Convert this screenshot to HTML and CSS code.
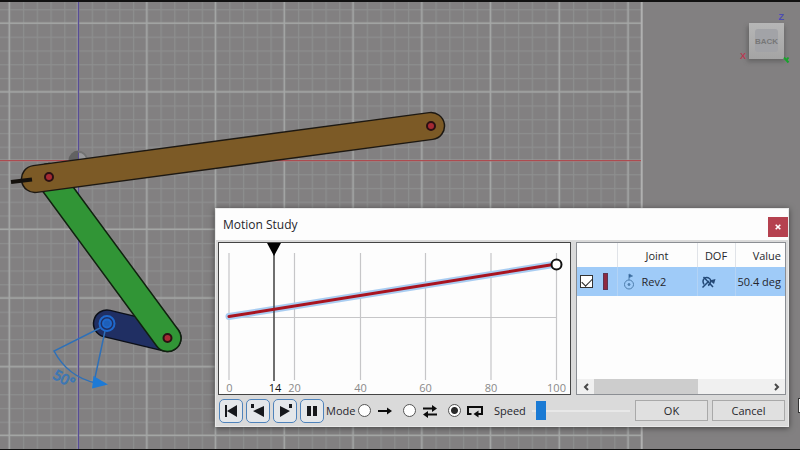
FILE: index.html
```html
<!DOCTYPE html>
<html lang="en">
<head>
<meta charset="utf-8">
<title>Motion Study</title>
<link rel="stylesheet" href="styles.css">
</head>
<body>
<main class="viewport">
  <svg class="scene" width="800" height="450" viewBox="0 0 800 450" role="img" aria-label="Linkage viewed from the back">
    <defs>
      <pattern id="minor" x="9.2" y="22.9" width="13.75" height="13.75" patternUnits="userSpaceOnUse">
        <path d="M0 0H13.75M0 0V13.75" stroke="#8d8e8e" stroke-width="2.400" fill="none"/>
      </pattern>
      <pattern id="major" x="-25" y="-11" width="68.75" height="68.7" patternUnits="userSpaceOnUse">
        <path d="M0 34.1H68.75M34.2 0V68.7" stroke="#a5a7a6" stroke-width="1.500" fill="none"/>
      </pattern>
      <linearGradient id="cube" x1="0" y1="0" x2="0" y2="1">
        <stop offset="0" stop-color="#b6b6b6"/><stop offset="1" stop-color="#a4a4a4"/>
      </linearGradient>
      <filter id="soft" x="-30%" y="-30%" width="160%" height="160%"><feGaussianBlur stdDeviation="2"/></filter>
    </defs>
    <rect width="641" height="450" fill="url(#minor)"/>
    <rect width="641" height="450" fill="url(#major)"/>
    <path d="M641.7 2V450" stroke="#b0b0b0" stroke-width="2"/>
    <path d="M0 160.7H641" stroke="#ad4b50" stroke-width="1.2"/>
    <path d="M78.5 2V450" stroke="#584c96" stroke-width="1.3"/>
    <path d="M78 160H68.500A10 10 0 0 1 78 150.500Z" fill="#626262"/>
    <path d="M78 151.500A9 9 0 0 1 87 160" fill="none" stroke="#727272" stroke-width="2"/>
    <path d="M79 160V153A7 7 0 0 1 86 160Z" fill="#98989a"/>
    <g stroke-linecap="round">
      <path d="M107 323.500L167.500 338" stroke="#0c0f18" stroke-width="28.500"/>
      <path d="M107 323.500L167.500 338" stroke="#202f63" stroke-width="25.500"/>
      <path d="M49 177L167.500 338" stroke="#10220f" stroke-width="28.500"/>
      <path d="M49 177L167.500 338" stroke="#319536" stroke-width="25.500"/>
      <path d="M35 179L431 126" stroke="#1d1812" stroke-width="28.500"/>
      <path d="M35 179L431 126" stroke="#7c5a26" stroke-width="25.500"/>
    </g>
    <path d="M11 182L32 179.500" stroke="#15110d" stroke-width="4"/>
    <g fill="#a62a34" stroke="#2b1013" stroke-width="2">
      <circle cx="49" cy="177" r="4"/><circle cx="431" cy="126" r="4"/><circle cx="167.500" cy="338" r="4"/>
    </g>
    <g fill="none" stroke="#2e70b8" stroke-width="1.500">
      <path d="M100 328L54 351Q68 377 96 383M105 331L94.500 380"/>
      <circle cx="107" cy="323.500" r="7.500" stroke="#1f69cc" stroke-width="2"/>
      <circle cx="107" cy="323.500" r="4" fill="#1f5fb8" stroke="#1f69cc" stroke-width="2"/>
    </g>
    <path d="M93.500 376L108 384.500L92 388.500Z" fill="#1d7ad6"/>
    <text class="angle" transform="translate(52 378) rotate(28)">50°</text>
    <rect x="747" y="26" width="38" height="36" fill="#555" opacity=".6" filter="url(#soft)"/>
    <rect x="749" y="23" width="35" height="36" fill="url(#cube)"/>
    <rect x="755" y="29" width="23" height="23" rx="3" fill="#a2a3a7"/>
    <text class="cube-label" x="766.500" y="44" text-anchor="middle">BACK</text>
    <text class="axis axis-z" x="778.500" y="20">Z</text>
    <text class="axis axis-x" x="740" y="59">X</text>
    <path class="axis-y" d="M784 57.500L788.500 62.500M788.500 57.500L786.500 60"/>
    <path d="M0 1H800" stroke="#111" stroke-width="2"/>
    <path d="M0 449.500H800" stroke="#111"/>
    <rect x="798.500" y="398.500" width="4" height="14" fill="#fff" stroke="#333"/>
  </svg>

  <section class="dialog" aria-labelledby="title">
    <header class="titlebar">
      <h1 class="title" id="title">Motion Study</h1>
      <button class="close" type="button" aria-label="Close"><svg width="6" height="6" viewBox="0 0 6 6"><path d="M.7 .7L5.300 5.300M5.300 .7L.7 5.300" stroke="#fff" stroke-width="1.600"/></svg></button>
    </header>
    <div class="panels">
      <div class="graph">
        <svg width="351" height="151" viewBox="219 243 351 151" role="img" aria-label="Joint value against step">
          <path d="M229 253V380M294.500 253V380M360.500 253V380M425.500 253V380M491 253V380M556.500 253V380M229 317.500H557" stroke="#c6c6c8" stroke-width="1.200" fill="none"/>
          <path d="M229 316.500L556.500 264" stroke="#a9cdf2" stroke-width="7" stroke-linecap="round"/>
          <path d="M274 243V381" stroke="#4b4b4b" stroke-width="1.600"/>
          <path d="M229 316.500L556.500 264" stroke="#a91420" stroke-width="3" stroke-linecap="round"/>
          <path d="M267 243H281L274 256Z" fill="#000"/>
          <circle cx="556.500" cy="264.500" r="5" fill="#fff" stroke="#111" stroke-width="2"/>
          <g class="ticks" text-anchor="middle">
            <text x="229.500" y="392">0</text><text class="now" x="275" y="392">14</text><text x="294.500" y="392">20</text><text x="360.500" y="392">40</text><text x="425.500" y="392">60</text><text x="491" y="392">80</text><text x="556.500" y="392">100</text>
          </g>
        </svg>
      </div>
      <div class="joints">
        <table class="table">
          <colgroup><col class="c-check"><col class="c-joint"><col class="c-dof"><col></colgroup>
          <thead><tr><td></td><th>Joint</th><th>DOF</th><th class="end">Value</th></tr></thead>
          <tbody><tr>
            <td><div class="cell"><input class="check" type="checkbox" checked aria-label="Rev2"><span class="swatch"></span></div></td>
            <td><div class="cell joint"><svg width="12" height="18" viewBox="0 0 12 18" fill="none" stroke="#4f7fae"><circle cx="6" cy="11.500" r="4.500"/><circle cx="6" cy="11.500" r="1" fill="#4f7fae"/><path d="M6 7V1"/><path d="M6 1L9.500 3L6 4.500" fill="#31619a"/></svg>Rev2</div></td>
            <td><div class="cell dof"><svg width="15" height="14" viewBox="0 0 15 14" fill="none" stroke="#244a78" stroke-width="1.500"><path d="M2.500 2L12 12M1.500 12.500L8 6"/><path d="M3 9.500C0 4 5 1 8.500 3.500C10.500 5 10 9 7 10.500"/><path d="M8.500 5.500L14.500 4L13 9Z" fill="#244a78" stroke="none"/></svg></div></td>
            <td class="end">50.4 deg</td>
          </tr></tbody>
        </table>
        <div class="scrollbar">
          <button class="arrow" type="button" aria-label="Scroll left"><svg width="6" height="8" viewBox="0 0 6 8"><path d="M5 1L2 4L5 7"/></svg></button>
          <div class="rail"><div class="thumb"></div></div>
          <button class="arrow" type="button" aria-label="Scroll right"><svg width="6" height="8" viewBox="0 0 6 8"><path d="M1 1L4 4L1 7"/></svg></button>
        </div>
      </div>
    </div>
    <footer class="controls">
      <div class="transport">
        <button class="play" type="button" aria-label="Go to start"><svg width="16" height="16" viewBox="0 0 16 16"><path d="M2 2H4V14H2ZM4 8L14 2V14Z"/></svg></button>
        <button class="play" type="button" aria-label="Play backward"><svg width="16" height="16" viewBox="0 0 16 16"><path d="M1 1H4V5H1ZM3 8L14 3V14Z"/></svg></button>
        <button class="play" type="button" aria-label="Play forward"><svg width="16" height="16" viewBox="0 0 16 16"><path d="M12 1H15V5H12ZM13 8L3 3V14Z"/></svg></button>
        <button class="play" type="button" aria-label="Pause"><svg width="16" height="16" viewBox="0 0 16 16"><path d="M3 3H7V13H3ZM9 3H13V13H9Z"/></svg></button>
      </div>
      <div class="modes" role="radiogroup" aria-labelledby="mode-label">
        <span class="mode-label" id="mode-label">Mode</span>
        <label class="mode"><input class="radio" type="radio" name="mode" aria-label="Once"><svg width="18" height="14" viewBox="0 0 18 14"><path class="line" d="M2 7H13"/><path d="M11 3.500L16 7L11 10.500Z"/></svg></label>
        <label class="mode"><input class="radio" type="radio" name="mode" aria-label="Back and forth"><svg width="18" height="14" viewBox="0 0 18 14"><path class="line" d="M2 4.500H13M5 10.500H16"/><path d="M11 1L16 4.500L11 8ZM7 7L2 10.500L7 14Z"/></svg></label>
        <label class="mode"><input class="radio" type="radio" name="mode" checked aria-label="Loop"><svg width="18" height="14" viewBox="0 0 18 14"><path class="line" d="M5.500 10H2V3H16V10H11"/><path d="M12.500 6.500L7.500 10L12.500 13.500Z"/></svg></label>
      </div>
      <label class="speed">Speed<input class="slider" type="range" min="0" max="100" value="5"></label>
      <div class="actions">
        <button class="action" type="button">OK</button>
        <button class="action" type="button">Cancel</button>
      </div>
    </footer>
  </section>
</main>
</body>
</html>
```
FILE: styles.css
```css
* { box-sizing: border-box; }
body {
  margin: 0;
  font-family: "Open Sans", "Noto Sans", sans-serif;
  font-size: 11px;
  color: #26262c;
}
button, input { margin: 0; padding: 0; font: inherit; color: inherit; }
.viewport {
  position: relative;
  min-height: 100vh;
  overflow: hidden;
  background: #828081;
}
.scene { display: block; }
.angle { font-size: 14px; fill: none; stroke: #3d77b3; stroke-width: 1px; }
.cube-label { font: bold 8px "Liberation Sans", sans-serif; fill: #777; }
.axis { font: bold 9px "Liberation Sans", sans-serif; }
.axis-z { fill: #4c4bb4; }
.axis-x { fill: #b83a52; }
.axis-y { fill: none; stroke: #17a52c; stroke-width: 2; }

.dialog {
  position: absolute;
  top: 208px;
  left: 215px;
  right: 11px;
  background: #dadada;
  border: 1px solid #e9e9e9;
  box-shadow: 0 1px 6px rgba(0, 0, 0, .5);
}
.titlebar {
  display: flex;
  justify-content: space-between;
  height: 31px;
  background: #fdfdfd;
}
.title { margin: 0; padding-left: 7px; font-size: 12px; font-weight: 400; line-height: 31px; }
.close {
  display: grid;
  place-items: center;
  width: 20px;
  height: 20px;
  margin-top: 8px;
  border: 0;
  background: #b5414f;
}
.panels { display: flex; gap: 5px; padding: 2px 2px 0; }
.graph { border: 1px solid #444; background: #fdfdfd; }
.graph svg { display: block; }
.ticks { font-size: 11px; fill: #8a8a8a; }
.ticks .now { fill: #111; }

.joints {
  flex: 1;
  display: flex;
  flex-direction: column;
  justify-content: space-between;
  min-width: 0;
  border: 1px solid #8b8e93;
  background: #fdfdfd;
}
.table { width: 100%; table-layout: fixed; border-collapse: collapse; }
.c-check { width: 40px; }
.c-joint { width: 80px; }
.c-dof { width: 38px; }
.table th, .table td { padding: 0; border-right: 1px solid #e0e3e8; font-weight: 400; }
.table th:last-child, .table td:last-child { border-right: 0; }
.table thead { height: 24px; }
.table tbody tr { height: 29px; background: #9fcbf8; }
.table tbody td { border-color: #b3d3f5; }
.table .end { padding-right: 4px; text-align: right; white-space: nowrap; }
.cell { display: flex; align-items: center; gap: 10px; padding-left: 3px; }
.joint { gap: 7px; padding-left: 5px; }
.check {
  appearance: none;
  width: 13px;
  height: 13px;
  border: 1px solid #333;
  background: #fff;
}
.check:checked::before {
  content: "";
  display: block;
  width: 9px;
  height: 5px;
  margin: 2px 1px;
  border-left: 1px solid #222;
  border-bottom: 1px solid #222;
  transform: rotate(-45deg);
}
.swatch { width: 5px; height: 17px; border: 1px solid #5c3350; background: #8e2940; }
.scrollbar { display: flex; height: 15px; background: #f0f0f0; }
.arrow { display: grid; place-items: center; width: 17px; border: 0; background: none; }
.arrow path { fill: none; stroke: #484848; stroke-width: 2; }
.rail { flex: 1; }
.thumb { width: 60%; height: 15px; background: #cdcdcd; }

.controls { display: flex; align-items: center; gap: 2px; height: 31px; padding: 0 3px; }
.transport { display: flex; gap: 3px; }
.play {
  display: grid;
  place-items: center;
  width: 24px;
  height: 24px;
  border: 1px solid #4f83bb;
  border-radius: 5px;
  background: #e4e7ea;
}
.play path { fill: #16181c; }
.modes { display: flex; align-items: center; gap: 9px; }
.mode-label { width: 23px; }
.mode { display: flex; align-items: center; gap: 5px; }
.mode path { fill: #0c0c0c; }
.mode .line { fill: none; stroke: #0c0c0c; stroke-width: 2; }
.radio {
  appearance: none;
  width: 13px;
  height: 13px;
  border: 1px solid #555;
  border-radius: 50%;
  background: #fff;
}
.radio:checked { background: radial-gradient(circle, #2a2a2a 3px, #fff 4px); }
.speed { flex: 1; display: flex; align-items: center; gap: 6px; min-width: 0; padding: 0 3px 0 8px; }
.slider { appearance: none; flex: 1; min-width: 0; height: 20px; background: none; }
.slider::-webkit-slider-runnable-track { height: 2px; background: #e8e8e8; }
.slider::-webkit-slider-thumb {
  appearance: none;
  width: 10px;
  height: 19px;
  margin-top: -9px;
  background: #1a7ad4;
}
.actions { display: flex; gap: 4px; }
.action { width: 73px; height: 21px; border: 1px solid #a9a9a9; background: #e0e0e0; }
```
